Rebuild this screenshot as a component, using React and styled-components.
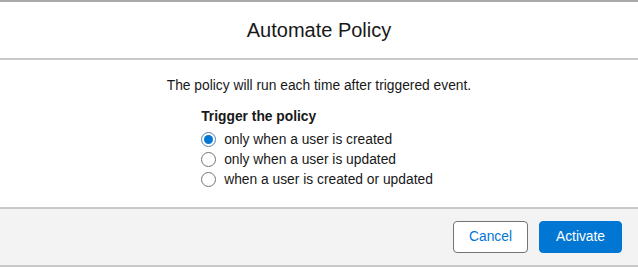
import React, { useState } from "react";
import styled, { createGlobalStyle } from "styled-components";

const Global = createGlobalStyle`
  html, body { margin: 0; padding: 0; background: #fff; }
  body { font-family: "Liberation Sans", Arial, sans-serif; color: #181818; }
`;

const Modal = styled.div`
  width: 638px;
  height: 267px;
  display: flex;
  flex-direction: column;
  box-sizing: border-box;
  border-top: 2px solid #a9a9a9;
  border-bottom: 2px solid #c9c9c9;
`;

const Header = styled.header`
  height: 58px;
  box-sizing: border-box;
  border-bottom: 2px solid #c9c9c9;
  display: flex;
  align-items: center;
  justify-content: center;
`;

const Title = styled.h2`
  margin: 0;
  font-size: 20px;
  font-weight: 400;
  color: #181818;
  line-height: 1.25;
`;

const Body = styled.div`
  flex: 1;
  display: flex;
  flex-direction: column;
  align-items: center;
  padding-top: 17px;
  font-size: 13.8px;
`;

const Intro = styled.p`
  margin: 0;
  line-height: 18px;
`;

const Fieldset = styled.fieldset`
  border: 0;
  margin: 13px 0 0 -4px;
  padding: 0;
  display: flex;
  flex-direction: column;
`;

const Legend = styled.legend`
  padding: 0;
  font-weight: 700;
  line-height: 18px;
  margin-bottom: 3px;
`;

const Option = styled.label`
  display: flex;
  align-items: center;
  gap: 8px;
  height: 20px;
  cursor: pointer;
`;

const HiddenInput = styled.input`
  position: absolute;
  opacity: 0;
  width: 0;
  height: 0;
`;

const Circle = styled.span`
  width: 15px;
  height: 15px;
  box-sizing: border-box;
  border-radius: 50%;
  border: 1px solid ${(p) => (p.$checked ? "#5c7fa8" : "#747474")};
  display: inline-flex;
  align-items: center;
  justify-content: center;
  background: #fff;
  &::after {
    content: "";
    width: 9px;
    height: 9px;
    border-radius: 50%;
    background: ${(p) => (p.$checked ? "#0176d3" : "transparent")};
  }
`;

const Footer = styled.footer`
  height: 58px;
  box-sizing: border-box;
  border-top: 2px solid #c9c9c9;
  background: #f3f3f3;
  display: flex;
  align-items: center;
  justify-content: flex-end;
  gap: 11px;
  padding: 0 16px 1px;
`;

const Button = styled.button`
  height: 32px;
  padding: 0 12px;
  min-width: ${(p) => (p.$brand ? "83px" : "75px")};
  border-radius: 4px;
  font-family: inherit;
  font-size: 13.8px;
  line-height: 30px;
  cursor: pointer;
  border: 1px solid ${(p) => (p.$brand ? "#0176d3" : "#747474")};
  background: ${(p) => (p.$brand ? "#0176d3" : "#fff")};
  color: ${(p) => (p.$brand ? "#fff" : "#0176d3")};
`;

const options = [
  "only when a user is created",
  "only when a user is updated",
  "when a user is created or updated",
];

export default function App() {
  const [sel, setSel] = useState(0);
  return (
    <>
      <Global />
      <Modal>
        <Header>
          <Title>Automate Policy</Title>
        </Header>
        <Body>
          <Intro>The policy will run each time after triggered event.</Intro>
          <Fieldset>
            <Legend>Trigger the policy</Legend>
            {options.map((o, i) => (
              <Option key={o}>
                <HiddenInput
                  type="radio"
                  name="trigger"
                  checked={sel === i}
                  onChange={() => setSel(i)}
                />
                <Circle $checked={sel === i} />
                {o}
              </Option>
            ))}
          </Fieldset>
        </Body>
        <Footer>
          <Button>Cancel</Button>
          <Button $brand>Activate</Button>
        </Footer>
      </Modal>
    </>
  );
}
